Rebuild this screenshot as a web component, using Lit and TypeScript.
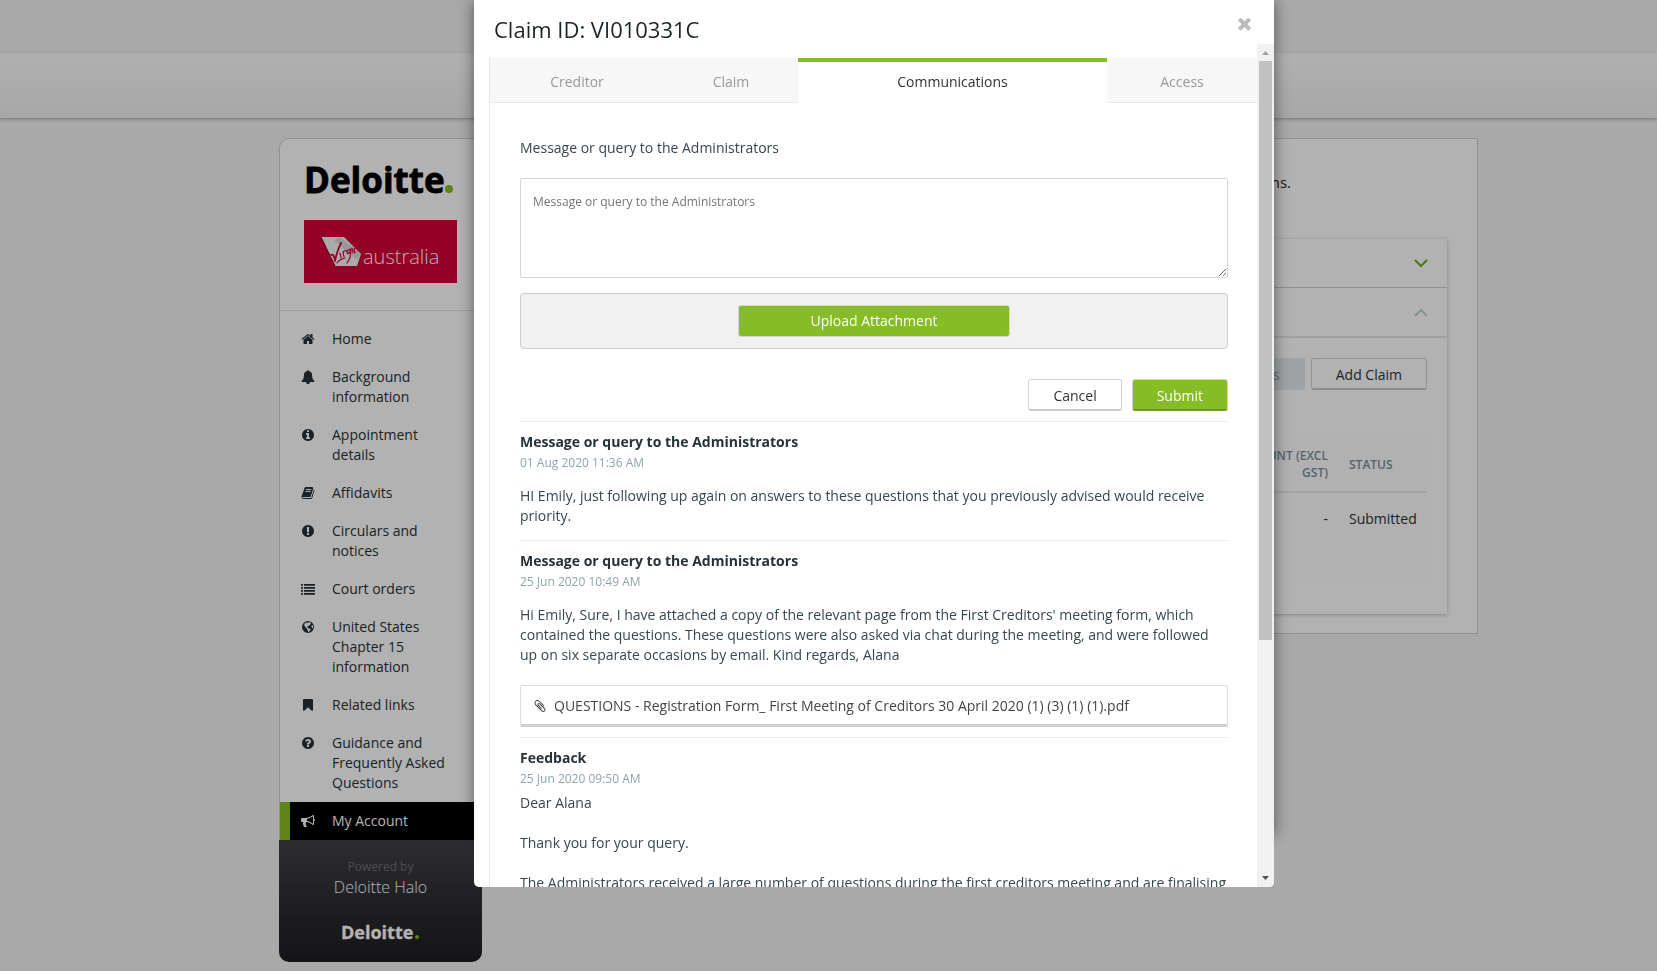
import { LitElement, html, css, svg } from "lit";
import { customElement } from "lit/decorators.js";
import { classMap } from "lit/directives/class-map.js";

const icons: Record<string, string> = {
  home: "M1472 992v480q0 26-19 45t-45 19h-384v-384h-256v384h-384q-26 0-45-19t-19-45v-480q0-1 .5-3t.5-3l575-474 575 474q1 2 1 6zm223-69l-62 74q-8 9-21 11h-3q-13 0-21-7l-692-577-692 577q-12 8-24 7-13-2-21-11l-62-74q-8-10-7-23.5t11-21.5l719-599q32-26 76-26t76 26l244 204v-195q0-14 9-23t23-9h192q14 0 23 9t9 23v408l219 182q10 8 11 21.5t-7 23.5z",
  bell: "M1728 1408q0 52-38 90t-90 38h-448q0 106-75 181t-181 75-181-75-75-181h-448q-52 0-90-38t-38-90q50-42 91-88t85-119.5 74.5-158.5 50-206 19.5-260q0-152 117-282.5t307-158.5q-8-19-8-39 0-40 28-68t68-28 68 28 28 68q0 20-8 39 190 28 307 158.5t117 282.5q0 139 19.5 260t50 206 74.5 158.5 85 119.5 91 88z",
  info: "M1152 1376v-160q0-14-9-23t-23-9h-96v-512q0-14-9-23t-23-9h-320q-14 0-23 9t-9 23v160q0 14 9 23t23 9h96v320h-96q-14 0-23 9t-9 23v160q0 14 9 23t23 9h448q14 0 23-9t9-23zm-128-896v-160q0-14-9-23t-23-9h-192q-14 0-23 9t-9 23v160q0 14 9 23t23 9h192q14 0 23-9t9-23zm640 416q0 209-103 385.5t-279.5 279.5-385.5 103-385.5-103-279.5-279.5-103-385.5 103-385.5 279.5-279.5 385.5-103 385.5 103 279.5 279.5 103 385.5z",
  book: "M1703 478q40 57 18 129l-275 906q-19 64-76.5 107.5t-122.5 43.5h-923q-77 0-148.5-53.5t-99.5-131.5q-24-67-2-127 0-4 3-27t4-37q1-8-3-21.5t-3-19.5q2-11 8-21t16.5-23.5 16.5-23.5q23-38 45-91.5t30-91.5q3-10 .5-30t-.5-28q3-11 17-28t17-23q21-36 42-92t25-90q1-9-2.5-32t.5-28q4-13 22-30.5t22-22.5q19-26 42.5-84.5t27.5-96.5q1-8-3-25.5t-2-26.5q2-8 9-18t18-23 17-21q8-12 16.5-30.5t15-35 16-36 19.5-32 26.5-23.5 36-11.5 47.5 5.5l-1 3q38-9 51-9h761q74 0 114 56t18 130l-274 906q-36 119-71.5 153.5t-128.5 34.5h-869q-27 0-38 15-11 16-1 43 24 70 144 70h923q29 0 56-15.5t35-41.5l300-987q7-22 5-57 38 15 59 43zm-1064 2q-4 13 2 22.5t20 9.5h608q13 0 25.5-9.5t16.5-22.5l21-64q4-13-2-22.5t-20-9.5h-608q-13 0-25.5 9.5t-16.5 22.5zm-83 256q-4 13 2 22.5t20 9.5h608q13 0 25.5-9.5t16.5-22.5l21-64q4-13-2-22.5t-20-9.5h-608q-13 0-25.5 9.5t-16.5 22.5z",
  exclamation: "M896 128q209 0 385.5 103t279.5 279.5 103 385.5-103 385.5-279.5 279.5-385.5 103-385.5-103-279.5-279.5-103-385.5 103-385.5 279.5-279.5 385.5-103zm128 1247v-190q0-14-9-23.5t-22-9.5h-192q-13 0-23 10t-10 23v190q0 13 10 23t23 10h192q13 0 22-9.5t9-23.5zm-2-344l18-621q0-12-10-18-10-8-24-8h-220q-14 0-24 8-10 6-10 18l17 621q0 10 10 17.5t24 7.5h185q14 0 23.5-7.5t10.5-17.5z",
  list: "M0 256h256v224h-256zM384 256h1408v224h-1408zM0 640h256v224h-256zM384 640h1408v224h-1408zM0 1024h256v224h-256zM384 1024h1408v224h-1408zM0 1408h256v224h-256zM384 1408h1408v224h-1408z",
  globe: "M896 128a768 768 0 1 0 0 1536a768 768 0 1 0 0-1536zM1010 270L1180 330L1290 420L1180 500L1240 560L1080 640L1000 760L860 800L760 900L880 960L960 1080L1180 1120L1240 1220L1120 1380L1000 1540L900 1560L880 1300L760 1160L700 1020L520 860L400 640L480 440L640 330L760 360L860 420L900 340ZM1440 620L1540 800L1540 1000L1440 1080L1380 920L1320 820Z",
  bookmark: "M1420 128q23 0 44 9 33 13 52.5 41t19.5 62v1289q0 34-19.5 62t-52.5 41q-19 8-44 8-48 0-83-32l-441-424-441 424q-36 33-83 33-23 0-44-9-33-13-52.5-41t-19.5-62v-1289q0-34 19.5-62t52.5-41q21-9 44-9h1048z",
  question: "M1024 1376v-192q0-14-9-23t-23-9h-192q-14 0-23 9t-9 23v192q0 14 9 23t23 9h192q14 0 23-9t9-23zm256-672q0-88-55.5-163t-138.5-116-170-41q-243 0-371 213-15 24 8 42l132 100q7 6 19 6 16 0 25-12 53-68 86-92 34-24 86-24 48 0 85.5 26t37.5 59q0 38-20 61t-68 45q-63 28-115.5 86.5t-52.5 125.5v36q0 14 9 23t23 9h192q14 0 23-9t9-23q0-19 21.5-49.5t54.5-49.5q32-18 49-28.5t46-35 44.5-48 28-60.5 12.5-81zm384 192q0 209-103 385.5t-279.5 279.5-385.5 103-385.5-103-279.5-279.5-103-385.5 103-385.5 279.5-279.5 385.5-103 385.5 103 279.5 279.5 103 385.5z",
  bullhorn: "M1664 640q53 0 90.5 37.5t37.5 90.5-37.5 90.5-90.5 37.5v384q0 52-38 90t-90 38q-417-347-812-380-58 19-91 66t-31 100.5 40 92.5q-20 33-23 65.5t6 58 33.5 55 48 50 61.5 50.5q-29 58-111.5 83t-168.5 11.5-132-55.5q-7-23-29.5-87.5t-32-94.5-23-89-15-101 3.5-98.5 22-110.5h-122q-66 0-113-47t-47-113v-192q0-66 47-113t113-47h480q435 0 896-384 52 0 90 38t38 90v384zm-128 604v-954q-394 302-768 343v270q377 42 768 341z",
  times: "M1490 1322q0 40-28 68l-136 136q-28 28-68 28t-68-28l-294-294-294 294q-28 28-68 28t-68-28l-136-136q-28-28-28-68t28-68l294-294-294-294q-28-28-28-68t28-68l136-136q28-28 68-28t68 28l294 294 294-294q28-28 68-28t68 28l136 136q28 28 28 68t-28 68l-294 294 294 294q28 28 28 68z",
  paperclip: "M1596 1385q0 117-79 196t-196 79q-135 0-235-100l-777-776q-113-115-113-271 0-159 110-270t269-111q158 0 273 113l605 606q10 10 10 22 0 16-30.5 46.5t-46.5 30.5q-13 0-23-10l-606-607q-79-77-181-77-106 0-179 75t-73 181q0 105 76 181l776 777q63 63 145 63 64 0 106-42t42-106q0-82-63-145l-581-581q-26-24-60-24-29 0-48 19t-19 48q0 32 25 59l410 410q10 10 10 22 0 16-31 47t-47 31q-12 0-22-10l-410-410q-63-61-63-149 0-82 57-139t139-57q88 0 149 63l581 581q100 98 100 235z",
};

const icon = (name: string) => html`<svg class="icon" viewBox="0 0 1792 1792" aria-hidden="true">
  ${svg`<path fill-rule="evenodd" d=${icons[name]}></path>`}
</svg>`;

const navItems = [
  { icon: "home", label: "Home" },
  { icon: "bell", label: "Background information" },
  { icon: "info", label: "Appointment details" },
  { icon: "book", label: "Affidavits" },
  { icon: "exclamation", label: "Circulars and notices" },
  { icon: "list", label: "Court orders" },
  { icon: "globe", label: "United States Chapter 15 information" },
  { icon: "bookmark", label: "Related links" },
  { icon: "question", label: "Guidance and Frequently Asked Questions" },
  { icon: "bullhorn", label: "My Account", active: true },
];

const baseStyles = css`
  :host {
    font-family: "Open Sans", "Noto Sans", sans-serif;
    font-size: 14px;
    line-height: 20px;
    color: #263238;
  }
  * {
    box-sizing: border-box;
  }
  button,
  textarea {
    font: inherit;
    margin: 0;
  }
  .icon {
    width: 14px;
    height: 14px;
    fill: currentColor;
    display: block;
  }
  .btn {
    height: 32px;
    padding: 2px 24px 0;
    border: 1px solid #d4d4d4;
    border-bottom: 2px solid #cacaca;
    border-radius: 3px;
    background: #fff;
    color: #333;
  }
`;

@customElement("side-bar")
export class SideBar extends LitElement {
  static styles = [
    baseStyles,
    css`
      :host {
        display: block;
        width: 203px;
        flex: none;
      }
      .panel {
        border: 1px solid #d2d2d2;
        border-bottom: 0;
        border-radius: 10px 10px 0 0;
        background: #fff;
      }
      .logos {
        padding: 22px 24px 27px;
        border-bottom: 1px solid #e4e4e4;
      }
      .logos svg {
        display: block;
      }
      .brand {
        margin-bottom: 15px;
      }
      .nav {
        padding-top: 9px;
      }
      .link {
        display: flex;
        padding: 9px 20px 9px 21px;
        gap: 17px;
        color: inherit;
        text-decoration: none;
      }
      .link .icon {
        flex: none;
        margin-top: 3px;
      }
      .active {
        background: #000;
        color: #fff;
        padding-left: 11px;
        border-left: 10px solid #86bc25;
      }
      .foot {
        height: 122px;
        padding-top: 17px;
        border-radius: 0 0 10px 10px;
        background: linear-gradient(#3f4045, #1d1d20);
        text-align: center;
        color: #6f7073;
        font-size: 12px;
      }
      .halo {
        font-size: 16px;
        color: #fff;
        font-weight: 300;
      }
      .foot svg {
        display: block;
        margin: 24px auto 0;
      }
      .wordmark {
        font-family: "Open Sans", sans-serif;
        font-weight: 700;
      }
      .fly {
        font-family: "Open Sans", sans-serif;
        font-weight: 300;
      }
    `,
  ];

  render() {
    return html`
      <div class="panel">
        <div class="logos">
          <svg class="brand" width="153" height="44" viewBox="0 0 153 44" role="img" aria-label="Deloitte">
            <text class="wordmark" x="0" y="32" font-size="35" stroke="#000" stroke-width="0.8" fill="#000">Deloitte</text>
            <circle cx="145" cy="28" r="4" fill="#86bc25" />
          </svg>
          <svg width="153" height="63" viewBox="0 0 153 63" role="img" aria-label="Virgin Australia">
            <rect width="153" height="63" fill="#d60037" />
            <path d="M17 17H40L57 34L53 46H31Z" fill="#f4f4f4" />
            <path d="M36 17L57 34L53 40L30 20Z" fill="#d8d8d8" />
            <path d="M17 17L31 46" stroke="#8a0024" stroke-width="1" />
            <g fill="none" stroke="#d60037" stroke-width="1.4" stroke-linecap="round" stroke-linejoin="round">
              <path d="M27 35Q30 33 31 41Q33 31 37 23" stroke-width="1.8" />
              <path
                d="M36 33L37 38M40 37L39 32Q41 30 43 31M47 29Q43 29 43 33Q45 35 47 29L46 38L43 43M41 38Q36 39 33 43M48 28L49 33M51 33L50 29Q53 27 54 30"
                stroke-width="1.2"
              />
            </g>
            <text class="fly" x="59" y="44" font-size="20" fill="#fff">australia</text>
          </svg>
        </div>
        <nav class="nav">
          ${navItems.map(
            (item) => html`<a href="#" class=${classMap({ link: true, active: !!item.active })}>
              ${icon(item.icon)}<span>${item.label}</span>
            </a>`
          )}
        </nav>
      </div>
      <div class="foot">
        <div>Powered by</div>
        <div class="halo">Deloitte Halo</div>
        <svg width="80" height="24" viewBox="0 0 80 24" role="img" aria-label="Deloitte">
          <text class="wordmark" x="0" y="18" font-size="18" fill="#fff" stroke="#fff" stroke-width="0.3">Deloitte</text>
          <circle cx="76" cy="16" r="2" fill="#86bc25" />
        </svg>
      </div>
    `;
  }
}

@customElement("claims-panel")
export class ClaimsPanel extends LitElement {
  static styles = [
    baseStyles,
    css`
      :host {
        display: block;
        flex: 1;
      }
      .panel {
        border: 1px solid #d2d2d2;
        background: #fff;
        padding: 31px 30px 19px;
      }
      .intro {
        margin: 0 156px 45px 0;
        text-align: right;
        line-height: 24px;
        font-size: 15px;
        color: #222;
      }
      .card {
        box-shadow: 0 1px 4px rgba(0, 0, 0, 0.25);
      }
      .fold {
        display: flex;
        justify-content: flex-end;
        align-items: center;
        width: 100%;
        height: 49px;
        padding: 0 19px;
        border: 0;
        border-bottom: 1px solid #ccc;
        background: none;
        color: #76a91e;
      }
      .open {
        border-bottom: 2px solid #e6e6e6;
        height: 50px;
        color: #c3ced3;
      }
      .fold svg {
        fill: none;
        stroke: currentColor;
        stroke-width: 2;
      }
      .body {
        padding: 20px 20px 30px;
      }
      .actions {
        display: flex;
        justify-content: flex-end;
        gap: 6px;
        margin-bottom: 44px;
      }
      .off {
        border-color: #e6eaed;
        background: #e6eaed;
        color: #90a4ae;
      }
      .claims {
        width: 100%;
        border-collapse: collapse;
        background: #fefefe;
      }
      .claims th {
        padding: 13px 0 10px;
        border-bottom: 2px solid #e8e8e8;
        font-size: 12px;
        line-height: 17px;
        font-weight: 600;
        color: #78909c;
        text-align: left;
      }
      .claims td {
        height: 92px;
        padding: 16px 0;
        vertical-align: top;
      }
      .claims .amount {
        text-align: right;
        padding-right: 21px;
      }
      .claims .status {
        width: 78px;
      }
      .wrap {
        display: inline-block;
        vertical-align: top;
        width: 100px;
      }
    `,
  ];

  render() {
    return html`<section class="panel">
      <p class="intro">claims.</p>
      <div class="card">
        <button class="fold" aria-label="Expand section">
          <svg width="14" height="9" viewBox="0 0 14 9"><path d="M1 1L7 7L13 1" /></svg>
        </button>
        <button class="fold open" aria-label="Collapse section">
          <svg width="14" height="9" viewBox="0 0 14 9"><path d="M1 8L7 2L13 8" /></svg>
        </button>
        <div class="body">
          <div class="actions">
            <button class="btn off" disabled>Claims</button>
            <button class="btn">Add Claim</button>
          </div>
          <table class="claims">
            <thead>
              <tr>
                <th class="amount"><span class="wrap">AMOUNT (EXCL GST)</span></th>
                <th class="status">STATUS</th>
              </tr>
            </thead>
            <tbody>
              <tr>
                <td class="amount">-</td>
                <td class="status">Submitted</td>
              </tr>
            </tbody>
          </table>
        </div>
      </div>
    </section>`;
  }
}

@customElement("claim-dialog")
export class ClaimDialog extends LitElement {
  static styles = [
    baseStyles,
    css`
      :host {
        display: block;
        width: 800px;
      }
      .dialog {
        height: 86vh;
        background: #fff;
        box-shadow: 0 0 15px rgba(0, 0, 0, 0.5);
      }
      .head {
        display: flex;
        justify-content: space-between;
        height: 44px;
        padding: 14px 20px 0;
      }
      .title {
        margin: 0;
        font-size: 22px;
        line-height: 30px;
        font-weight: 400;
        color: #1d2326;
      }
      .close {
        height: 18px;
        padding: 0;
        border: 0;
        background: none;
        color: #bcbcbc;
      }
      .close .icon {
        width: 19px;
        height: 19px;
      }
      .body {
        display: flex;
        height: calc(100vh - 128px);
        background: #fff;
        border-radius: 0 0 5px 5px;
        overflow: hidden;
      }
      .scroll {
        flex: 1;
        min-width: 0;
        overflow: hidden;
        padding: 14px 0 0 15px;
      }
      .track {
        width: 17px;
        display: flex;
        flex-direction: column;
        align-items: center;
        background: #f1f1f1;
      }
      .track svg {
        flex: none;
        display: block;
      }
      .gutter {
        flex: 1;
        width: 13px;
      }
      .thumb {
        height: 71.6%;
        background: #c1c1c1;
      }
      .tabs {
        display: flex;
        border-left: 1px solid #e8e8e8;
      }
      .tab {
        flex: 134 1 0;
        height: 45px;
        padding: 0;
        border: 0;
        border-top: 4px solid #f7f7f7;
        border-bottom: 1px solid #e8e8e8;
        background: #f7f7f7;
        color: #999;
      }
      .creditor {
        flex-grow: 174;
      }
      .access {
        flex-grow: 150;
      }
      .current {
        flex-grow: 309;
        background: #fff;
        color: #333;
        border-top-color: #86bc25;
        border-bottom-color: #fff;
      }
      .content {
        padding: 35px 29px 0 30px;
        border-left: 1px solid #e8e8e8;
      }
      .label {
        display: block;
        margin-bottom: 20px;
        color: #37474f;
      }
      .box {
        display: block;
        width: 100%;
        height: 100px;
        padding: 13px 12px;
        border: 1px solid #d6d6d6;
        border-radius: 2px;
        font-size: 12px;
        line-height: 20px;
        resize: vertical;
      }
      .box::placeholder {
        color: #757575;
      }
      .upload {
        display: flex;
        justify-content: center;
        margin: 15px 0 30px;
        padding: 11px;
        border: 1px solid #ccc;
        border-radius: 4px;
        background: #f1f1f1;
      }
      .primary {
        background: #86bc25;
        color: #fff;
        font-weight: 500;
        border-bottom-color: #6f9d1d;
      }
      .upload .btn {
        width: 272px;
        padding: 0;
        border: 1px solid #d4d4d4;
      }
      .actions {
        display: flex;
        justify-content: flex-end;
        gap: 10px;
        margin-bottom: 10px;
      }
      .message {
        border-top: 1px solid #ebebeb;
        padding: 10px 0;
      }
      .subject {
        margin: 0;
        font-size: 14px;
        font-weight: 700;
      }
      .date {
        font-size: 12px;
        line-height: 22px;
        color: #90a4ae;
      }
      .text {
        margin: 12px 0 4px;
        color: #37474f;
      }
      .reply {
        margin: 3px 0 20px;
        color: #37474f;
      }
      .reply ~ .reply {
        margin: 20px 0;
      }
      .file {
        display: flex;
        align-items: center;
        gap: 7px;
        margin-top: 20px;
        height: 42px;
        padding: 2px 12px 0;
        border: 1px solid #dcdcdc;
        border-bottom: 3px solid #d0d0d0;
        border-radius: 2px;
        color: #444;
        text-decoration: none;
      }
    `,
  ];

  render() {
    return html`<div class="dialog" role="dialog" aria-labelledby="title">
      <header class="head">
        <h1 class="title" id="title">Claim ID: VI010331C</h1>
        <button class="close" aria-label="Close">${icon("times")}</button>
      </header>
      <div class="body">
        <div class="scroll">
          <div class="tabs" role="tablist">
            <button class="tab creditor" role="tab">Creditor</button>
            <button class="tab" role="tab">Claim</button>
            <button class="tab current" role="tab" aria-selected="true">Communications</button>
            <button class="tab access" role="tab">Access</button>
          </div>
          <div class="content">
            <label class="label" for="message">Message or query to the Administrators</label>
            <textarea class="box" id="message" placeholder="Message or query to the Administrators"></textarea>
            <div class="upload"><button class="btn primary">Upload Attachment</button></div>
            <div class="actions">
              <button class="btn">Cancel</button>
              <button class="btn primary">Submit</button>
            </div>
            <article class="message">
              <h2 class="subject">Message or query to the Administrators</h2>
              <div class="date">01 Aug 2020 11:36 AM</div>
              <p class="text">
                HI Emily, just following up again on answers to these questions that you previously advised would
                receive priority.
              </p>
            </article>
            <article class="message">
              <h2 class="subject">Message or query to the Administrators</h2>
              <div class="date">25 Jun 2020 10:49 AM</div>
              <p class="text">
                Hi Emily, Sure, I have attached a copy of the relevant page from the First Creditors' meeting form,
                which contained the questions. These questions were also asked via chat during the meeting, and were
                followed up on six separate occasions by email. Kind regards, Alana
              </p>
              <a class="file" href="#">
                ${icon("paperclip")}
                <span>QUESTIONS - Registration Form_ First Meeting of Creditors 30 April 2020 (1) (3) (1) (1).pdf</span>
              </a>
            </article>
            <article class="message">
              <h2 class="subject">Feedback</h2>
              <div class="date">25 Jun 2020 09:50 AM</div>
              <p class="reply">Dear Alana</p>
              <p class="reply">Thank you for your query.</p>
              <p class="reply">
                The Administrators received a large number of questions during the first creditors meeting and are
                finalising
              </p>
            </article>
          </div>
        </div>
        <div class="track" aria-hidden="true">
          <svg width="17" height="17" viewBox="0 0 17 17"><path d="M5 11L8.5 7L12 11Z" fill="#a3a3a3" /></svg>
          <div class="gutter"><div class="thumb"></div></div>
          <svg width="17" height="17" viewBox="0 0 17 17"><path d="M5 6L8.5 10L12 6Z" fill="#505050" /></svg>
        </div>
      </div>
    </div>`;
  }
}

@customElement("app-root")
export class AppRoot extends LitElement {
  static styles = css`
    :host {
      display: block;
      min-height: 100vh;
      background: #f2f2f2;
    }
    .header {
      margin-top: 53px;
      height: 66px;
      box-sizing: border-box;
      border-bottom: 1px solid #c0c0c0;
      background: linear-gradient(#fdfdfd, #efefef);
      box-shadow: 0 1px 3px rgba(0, 0, 0, 0.2);
    }
    .shell {
      display: flow-root;
    }
    .layout {
      display: flex;
      align-items: flex-start;
      gap: 20px;
      max-width: 1299px;
      margin: 19px auto 0;
      padding-left: 100px;
      box-sizing: border-box;
    }
    .overlay {
      position: fixed;
      inset: 0;
      display: flex;
      justify-content: center;
      align-items: flex-start;
      padding-left: 91px;
      background: rgba(0, 0, 0, 0.3);
    }
  `;

  render() {
    return html`
      <div class="shell">
        <header class="header"></header>
        <main class="layout">
          <side-bar></side-bar>
          <claims-panel></claims-panel>
        </main>
      </div>
      <div class="overlay"><claim-dialog></claim-dialog></div>
    `;
  }
}
